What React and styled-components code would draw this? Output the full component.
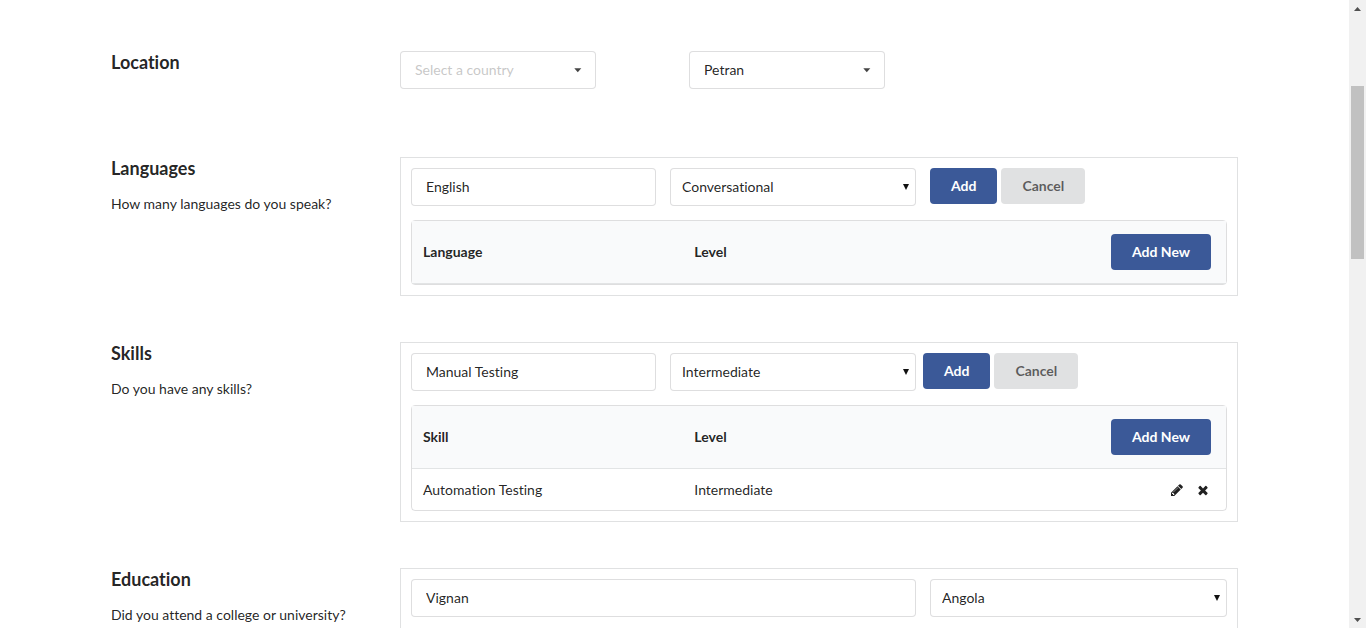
import React from "react";
import styled, { createGlobalStyle } from "styled-components";

const GlobalStyle = createGlobalStyle`
  *, *::before, *::after { box-sizing: border-box; }
  body {
    margin: 0;
    background: #fff;
    color: rgba(0, 0, 0, 0.87);
    font-family: Lato, "Liberation Sans", Arial, sans-serif;
    font-size: 14px;
    font-variant-ligatures: none;
    line-height: 20px;
  }
`;

const Shell = styled.div`
  display: grid;
  grid-template-columns: minmax(0, 1fr) 17px;
  height: 100vh;
`;

const Viewport = styled.div`
  overflow: hidden;
`;

const Content = styled.main`
  display: flex;
  flex-direction: column;
  gap: 46px;
  max-width: 1127px;
  margin: 0 auto;
  padding-top: 51px;
`;

const Section = styled.section`
  display: grid;
  grid-template-columns: 289px minmax(0, 1fr);
  padding-bottom: ${(p) => (p.$spaced ? "22px" : "0")};
`;

const Title = styled.h2`
  margin: 0 0 15px;
  font-size: 18px;
  font-weight: 700;
  line-height: 22px;
`;

const Hint = styled.p`
  margin: 0;
`;

const LocationFields = styled.div`
  display: grid;
  grid-template-columns: 196px 196px;
  gap: 93px;
`;

const Panel = styled.div`
  display: flex;
  flex-direction: column;
  gap: 14px;
  min-height: ${(p) => (p.$tall ? "240px" : "0")};
  padding: 10px;
  border: 1px solid #e0e1e2;
`;

const FormRow = styled.div`
  display: grid;
  grid-template-columns: ${(p) => p.$columns};
  gap: ${(p) => p.$gap || "14px"};
`;

const FieldPair = styled.div`
  display: grid;
  grid-template-columns: 245fr 246fr;
  gap: 14px;
`;

const TextInput = styled.input`
  width: 100%;
  height: 38px;
  padding: 0 14px 2px;
  border: 1px solid rgba(34, 36, 38, 0.15);
  border-radius: 4px;
  background: #fff;
  color: inherit;
  font: inherit;
  font-variant-ligatures: none;
`;

const SelectWrap = styled.div`
  position: relative;
  height: 38px;
`;

const SelectBox = styled.select`
  appearance: none;
  width: 100%;
  height: 38px;
  padding: 0 ${(p) => (p.$dropdown ? "14px" : "11px")};
  border: 1px solid rgba(34, 36, 38, 0.15);
  border-radius: 4px;
  background: #fff;
  color: ${(p) => (p.$placeholder ? "rgba(191, 191, 191, 0.87)" : "inherit")};
  font: inherit;
  font-variant-ligatures: none;
`;

const Arrow = styled.svg`
  position: absolute;
  top: ${(p) => (p.$dropdown ? "17px" : "15px")};
  right: ${(p) => (p.$dropdown ? "14px" : "6px")};
  pointer-events: none;
`;

const Buttons = styled.div`
  display: flex;
  align-items: flex-start;
  gap: 4px;
`;

const Button = styled.button`
  height: 36px;
  padding: 0 21px;
  border: 0;
  border-radius: 4px;
  background: ${(p) => (p.$primary ? "#3b5998" : "#e0e1e2")};
  color: ${(p) => (p.$primary ? "#fff" : "rgba(0, 0, 0, 0.6)")};
  font: inherit;
  font-weight: 700;
  white-space: nowrap;
`;

const Table = styled.table`
  width: 100%;
  table-layout: fixed;
  border: 1px solid rgba(34, 36, 38, 0.15);
  border-radius: 4px;
  border-collapse: separate;
  border-spacing: 0;
`;

const HeadCell = styled.th`
  padding: 13px 15px 13px 11px;
  border-bottom: 1px solid rgba(34, 36, 38, 0.1);
  background: #f9fafb;
  font-weight: 700;
  line-height: 20px;
  text-align: ${(p) => (p.$end ? "right" : "left")};
`;

const Cell = styled.td`
  height: 41px;
  padding: 0 16px 0 11px;
`;

const Actions = styled.div`
  display: flex;
  justify-content: flex-end;
  gap: 12px;
`;

const IconButton = styled.button`
  display: flex;
  padding: 0;
  border: 0;
  background: none;
  color: inherit;
`;

const Scrollbar = styled.div`
  display: grid;
  grid-template-rows: 17px 69fr 173fr 352fr 17px;
  padding: 0 2px;
  background: #f1f1f1;
`;

const ScrollArrow = styled.button`
  display: grid;
  place-items: center;
  padding: 0;
  border: 0;
  background: none;
  grid-row: ${(p) => p.$row};
`;

const Thumb = styled.div`
  grid-row: 3;
  background: #c1c1c1;
`;

function Select({ label, value, dropdown, placeholder }) {
  return (
    <SelectWrap>
      <SelectBox aria-label={label} defaultValue={value} $dropdown={dropdown} $placeholder={placeholder}>
        <option>{value}</option>
      </SelectBox>
      {dropdown ? (
        <Arrow $dropdown width="8" height="5" viewBox="0 0 8 5" aria-hidden="true">
          <path d="M0.3 0.2h7L3.8 4.2z" fill="#444" />
        </Arrow>
      ) : (
        <Arrow width="7" height="8" viewBox="0 0 7 8" aria-hidden="true">
          <path d="M0 1h6L3 7z" fill="#111" />
        </Arrow>
      )}
    </SelectWrap>
  );
}

function Label({ title, hint }) {
  return (
    <header>
      <Title>{title}</Title>
      {hint && <Hint>{hint}</Hint>}
    </header>
  );
}

function FormButtons() {
  return (
    <Buttons>
      <Button type="button" $primary>Add</Button>
      <Button type="button">Cancel</Button>
    </Buttons>
  );
}

const PENCIL =
  "M491 1536l91-91-235-235-91 91v107h128v128h107zm523-928q0-22-22-22-10 0-17 7l-542 542q-7 7-7 17 0 22 22 22 10 0 17-7l542-542q7-7 7-17zm-54-192l416 416-832 832h-416v-416zm683 96q0 53-37 90l-166 166-416-416 166-165q36-38 90-38 53 0 91 38l235 234q37 39 37 91z";
const CROSS =
  "M1490 1322q0 40-28 68l-136 136q-28 28-68 28t-68-28l-294-294-294 294q-28 28-68 28t-68-28l-136-136q-28-28-28-68t28-68l294-294-294-294q-28-28-28-68t28-68l136-136q28-28 68-28t68 28l294 294 294-294q28-28 68-28t68 28l136 136q28 28 28 68t-28 68l-294 294 294 294q28 28 28 68z";

function Action({ label, path }) {
  return (
    <IconButton type="button" aria-label={label}>
      <svg width="14" height="14" viewBox="0 0 1792 1792" fill="currentColor" aria-hidden="true">
        <path d={path} />
      </svg>
    </IconButton>
  );
}

function RecordTable({ heading, rows = [] }) {
  return (
    <Table>
      <thead>
        <tr>
          <HeadCell>{heading}</HeadCell>
          <HeadCell>Level</HeadCell>
          <HeadCell $end>
            <Button type="button" $primary>Add New</Button>
          </HeadCell>
        </tr>
      </thead>
      <tbody>
        {rows.map(([name, level]) => (
          <tr key={name}>
            <Cell>{name}</Cell>
            <Cell>{level}</Cell>
            <Cell>
              <Actions>
                <Action label="Edit" path={PENCIL} />
                <Action label="Remove" path={CROSS} />
              </Actions>
            </Cell>
          </tr>
        ))}
      </tbody>
    </Table>
  );
}

export default function App() {
  return (
    <Shell>
      <GlobalStyle />
      <Viewport>
        <Content>
          <Section $spaced>
            <Label title="Location" />
            <LocationFields>
              <Select label="Country" value="Select a country" dropdown placeholder />
              <Select label="City" value="Petran" dropdown />
            </LocationFields>
          </Section>

          <Section>
            <Label title="Languages" hint="How many languages do you speak?" />
            <Panel>
              <FormRow $columns="505fr 297fr">
                <FieldPair>
                  <TextInput aria-label="Language" defaultValue="English" />
                  <Select label="Language level" value="Conversational" />
                </FieldPair>
                <FormButtons />
              </FormRow>
              <RecordTable heading="Language" />
            </Panel>
          </Section>

          <Section>
            <Label title="Skills" hint="Do you have any skills?" />
            <Panel>
              <FormRow $columns="505fr 304fr" $gap="7px">
                <FieldPair>
                  <TextInput aria-label="Skill" defaultValue="Manual Testing" />
                  <Select label="Skill level" value="Intermediate" />
                </FieldPair>
                <FormButtons />
              </FormRow>
              <RecordTable heading="Skill" rows={[["Automation Testing", "Intermediate"]]} />
            </Panel>
          </Section>

          <Section>
            <Label title="Education" hint="Did you attend a college or university?" />
            <Panel $tall>
              <FormRow $columns="505fr 297fr">
                <TextInput aria-label="College or university" defaultValue="Vignan" />
                <Select label="Country of college" value="Angola" />
              </FormRow>
            </Panel>
          </Section>
        </Content>
      </Viewport>
      <Scrollbar>
        <ScrollArrow type="button" aria-label="Scroll up" $row={1}>
          <svg width="7" height="4" viewBox="0 0 7 4"><path d="M0 4h7L3.5 0z" fill="#505050" /></svg>
        </ScrollArrow>
        <Thumb />
        <ScrollArrow type="button" aria-label="Scroll down" $row={5}>
          <svg width="7" height="4" viewBox="0 0 7 4"><path d="M0 0h7L3.5 4z" fill="#505050" /></svg>
        </ScrollArrow>
      </Scrollbar>
    </Shell>
  );
}
